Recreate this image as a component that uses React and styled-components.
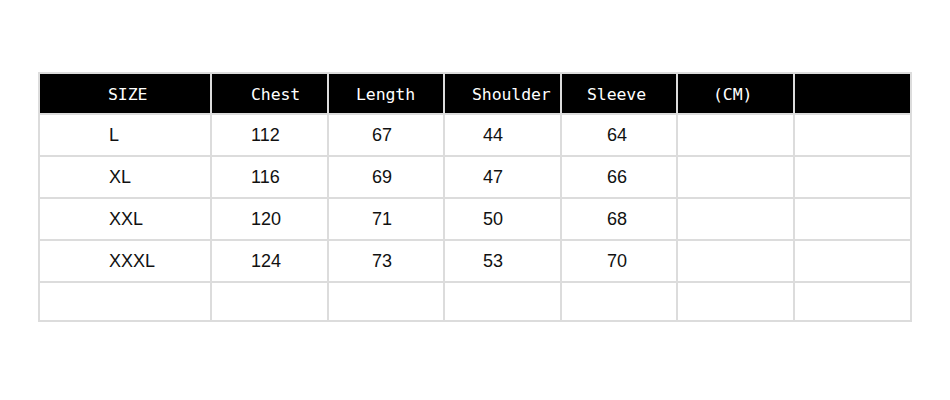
import React from "react";
import styled, { createGlobalStyle } from "styled-components";

const GlobalStyle = createGlobalStyle`
    html, body {
        margin: 0;
        padding: 0;
        background: #ffffff;
    }
`;

export const Page = styled.div`
    width: 950px;
    height: 400px;
    padding: 72px 0 0 38px;
    box-sizing: border-box;
    background: #ffffff;
`;

export const Table = styled.table`
    border-collapse: collapse;
    table-layout: fixed;
    width: 874px;
`;

export const HeadCell = styled.th`
    height: 37px;
    padding: 2px 0 0 ${(p) => p.$pad}px;
    background: #000000;
    color: #ffffff;
    border: 2px solid #dcdcdc;
    font-family: "DejaVu Sans Mono", "Liberation Mono", monospace;
    font-size: 16.5px;
    font-weight: normal;
    text-align: left;
    white-space: pre;
    letter-spacing: -0.1px;
`;

export const Cell = styled.td`
    height: ${(p) => (p.$short ? 36 : 39)}px;
    padding: 1px 0 0 ${(p) => p.$pad}px;
    border: 2px solid #dcdcdc;
    font-family: "Liberation Sans", Arial, sans-serif;
    font-size: 18px;
    color: #111111;
    text-align: left;
`;

const widths = [172, 117, 116, 117, 116, 117, 117];
const headers = ["SIZE", "Chest", "Length", "Shoulder", "Sleeve", "(CM)", ""];
const headPad = [68, 39, 27, 27, 25, 35, 0];
const bodyPad = [69, 39, 43, 38, 45, 0, 0];

const rows = [
    ["L", "112", "67", "44", "64", "", ""],
    ["XL", "116", "69", "47", "66", "", ""],
    ["XXL", "120", "71", "50", "68", "", ""],
    ["XXXL", "124", "73", "53", "70", "", ""],
    ["", "", "", "", "", "", ""],
];

const App = () => {
    return (
        <Page>
            <GlobalStyle />
            <Table>
                <colgroup>
                    {widths.map((w, i) => (
                        <col key={i} style={{ width: w }} />
                    ))}
                </colgroup>
                <thead>
                    <tr>
                        {headers.map((h, i) => (
                            <HeadCell key={i} $pad={headPad[i]}>{h}</HeadCell>
                        ))}
                    </tr>
                </thead>
                <tbody>
                    {rows.map((row, r) => (
                        <tr key={r}>
                            {row.map((v, i) => (
                                <Cell key={i} $pad={bodyPad[i]} $short={r === rows.length - 1}>{v}</Cell>
                            ))}
                        </tr>
                    ))}
                </tbody>
            </Table>
        </Page>
    );
};

export default App;
